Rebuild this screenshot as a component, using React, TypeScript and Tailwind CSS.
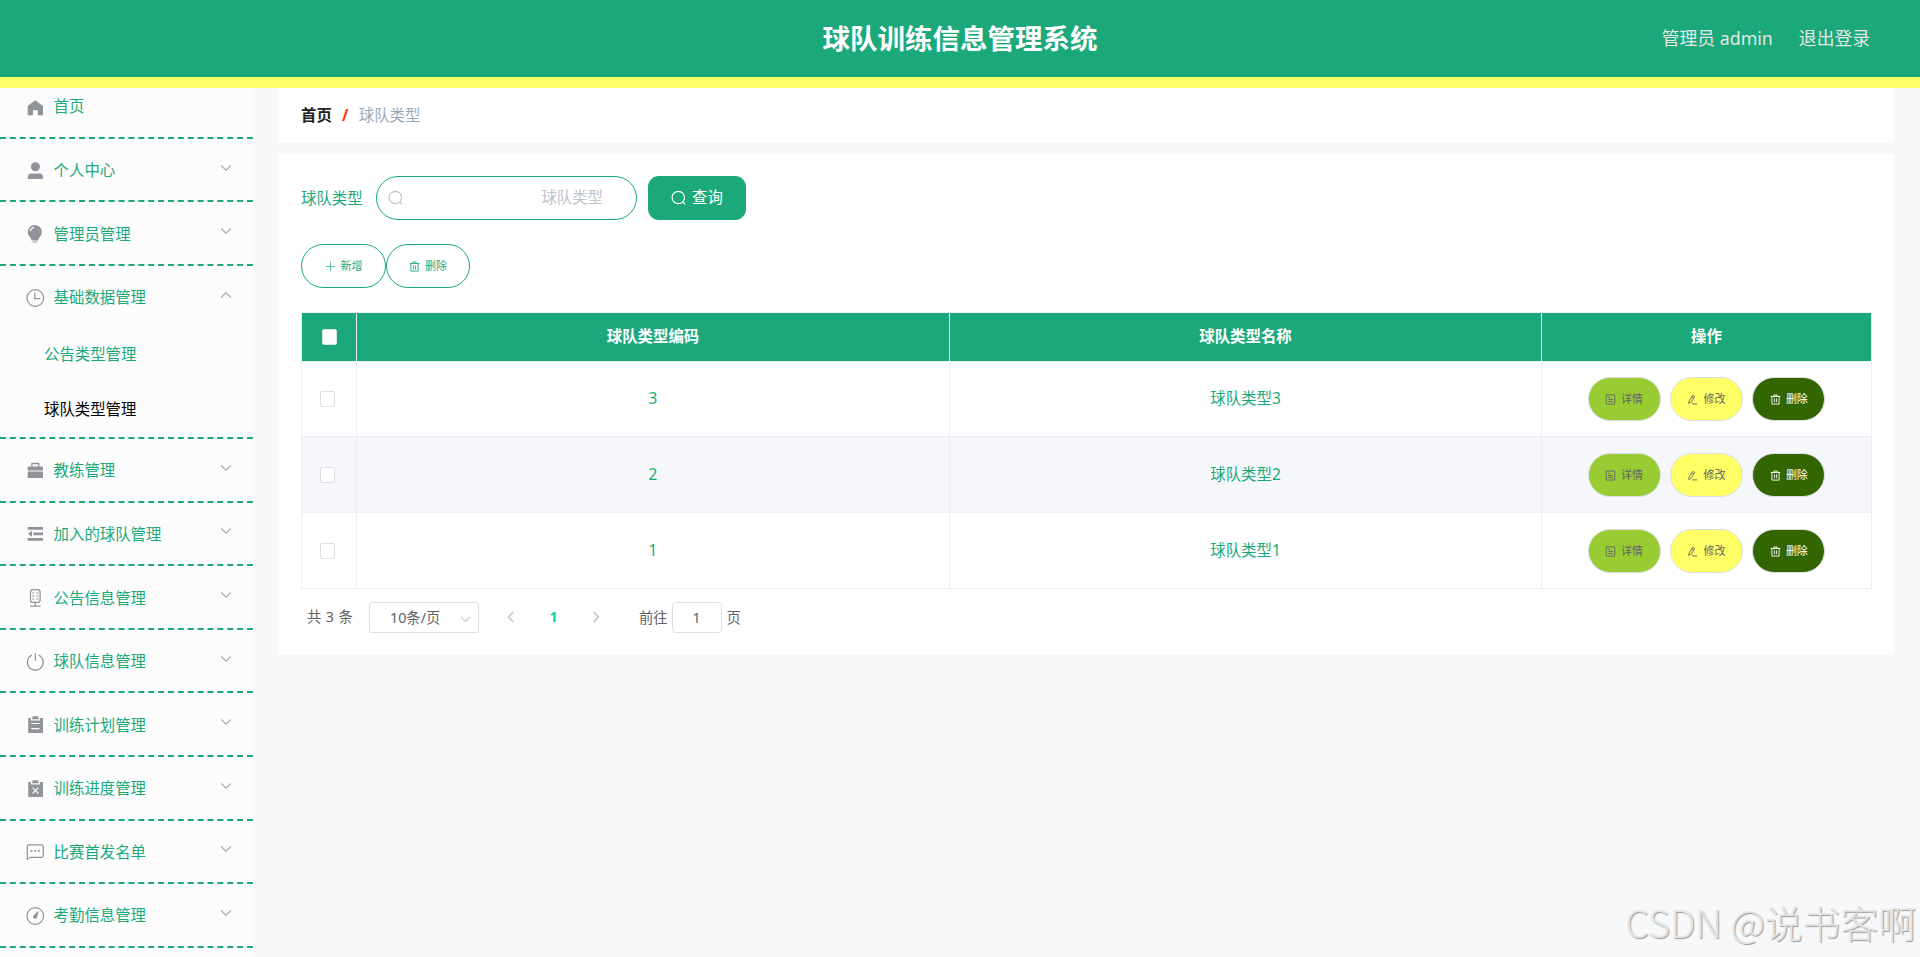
import React from "react";

type IconProps = { className?: string };

const stroke = {
  fill: "none",
  stroke: "currentColor",
  strokeWidth: 1.2,
  strokeLinecap: "round" as const,
  strokeLinejoin: "round" as const,
};

const icons: Record<string, React.ReactNode> = {
  home: <path fill="currentColor" d="M10.3 2.2 18 8v9.2h-5.2v-5H8v5H2.7V8z" />,
  user: (
    <g fill="currentColor">
      <circle cx="10.4" cy="5.8" r="4.5" />
      <path d="M2.8 18v-2.2c0-1.8 1.3-3.2 3.2-3.2h8.8c1.9 0 3.2 1.4 3.2 3.2V18z" />
    </g>
  ),
  bulb: (
    <g>
      <path
        fill="currentColor"
        d="M9.8.9a7.1 7.1 0 0 1 7.1 7.1c0 3-1.9 4.4-2.9 6-.5.9-.7 1.6-.9 2.600H6.500c-.2-1-.4-1.700-.9-2.600-1-1.600-2.900-3-2.900-6A7.100 7.100 0 0 1 9.800.9z"
      />
      <path d="M5.3 7.2A4.700 4.700 0 0 1 9 3.400" fill="none" stroke="#fcfcfc" strokeWidth="1.200" />
      <path d="M7.600 18h4.600" stroke="currentColor" strokeWidth="1" />
    </g>
  ),
  clock: (
    <g {...stroke}>
      <circle cx="10.3" cy="10" r="8.300" />
      <path d="M9.800 5.200v5.500h5" />
    </g>
  ),
  briefcase: (
    <g>
      <path d="M6.900 6V2.500h6.800V6" fill="none" stroke="currentColor" strokeWidth="1.300" />
      <path fill="currentColor" d="M2.700 6.400a1 1 0 0 1 1-1H17a1 1 0 0 1 1 1v3H2.700zM2.700 10.400H18V17H2.700z" />
    </g>
  ),
  fold: (
    <path
      fill="currentColor"
      d="M2.700 3H18v2.700H2.700zM8.300 8.500H18v2.700H8.300zM2.700 14H18v2.700H2.700zM7 6.800v6L3 9.800z"
    />
  ),
  mic: (
    <g {...stroke}>
      <rect x="5.500" y="1.700" width="9.600" height="12.600" rx="2.400" />
      <path d="M10.300 14.500v3.500M5.500 18.200h9.600M7.600 5h1.200M7.600 8h1.200M7.600 11h1.200M11.900 5h1.200M11.900 8h1.200M11.900 11h1.200" />
    </g>
  ),
  power: (
    <g {...stroke}>
      <path d="M6.600 3.300a7.900 7.900 0 1 0 7.400 0M10.300 1.500v6.800" />
    </g>
  ),
  order: (
    <g>
      <path fill="currentColor" d="M3.200 2.900H18V18H3.200zM7.500 1.300h5.800v3H7.500z" />
      <path d="M6.500 2.700v2.200h7.900V2.700M6.300 8.500h8.200M6.300 13.600h8.200" fill="none" stroke="#fcfcfc" strokeWidth="1.100" />
    </g>
  ),
  release: (
    <g>
      <path fill="currentColor" d="M3.200 2.900H18V18H3.200zM7.500 1.300h5.800v3H7.500z" />
      <path
        d="M6.500 2.700v2.200h7.900V2.700M7.600 8.700l5.800 5.800M13.400 8.700l-5.800 5.800"
        fill="none"
        stroke="#fcfcfc"
        strokeWidth="1.200"
      />
    </g>
  ),
  chat: (
    <g {...stroke}>
      <path d="M2.300 17.600V4.600a1.800 1.800 0 0 1 1.800-1.800h12.400a1.800 1.800 0 0 1 1.800 1.800v9a1.800 1.800 0 0 1-1.800 1.800H5z" />
      <path d="M6.300 8.800h.6M10 8.800h.6M13.700 8.800h.6" strokeWidth="1.800" />
    </g>
  ),
  compass: (
    <g>
      <circle cx="10.300" cy="10" r="8.300" {...stroke} />
      <path fill="currentColor" d="M13.800 4.600l-1.700 6.600a2 2 0 1 1-3.300-1.900z" />
    </g>
  ),
};

function MenuIcon({ name }: { name: string }) {
  return (
    <svg viewBox="0 0 20 20" className="size-5 shrink-0 text-[#909399]">
      {icons[name]}
    </svg>
  );
}

function Chevron({ className }: IconProps) {
  return (
    <svg viewBox="0 0 12 12" className={className} fill="none" stroke="currentColor" strokeWidth="1.1">
      <path d="M1.200 3.500 6 8.200l4.800-4.700" />
    </svg>
  );
}

function Search({ className }: IconProps) {
  return (
    <svg viewBox="0 0 16 16" className={className} fill="none" stroke="currentColor" strokeWidth="1.2">
      <circle cx="7.300" cy="7.500" r="6.200" />
      <path d="m11.800 12 2.500 2.400" />
    </svg>
  );
}

function Plus() {
  return (
    <svg viewBox="0 0 11 11" className="size-[11px]" fill="none" stroke="currentColor" strokeWidth="0.7">
      <path d="M5.500 1v9M1 5.500h9" />
    </svg>
  );
}

function Trash() {
  return (
    <svg viewBox="0 0 11 11" className="size-[11px]" fill="none" stroke="currentColor" strokeWidth="0.9">
      <path d="M.7 2.500h9.600M3.800 2.300V1h3.400v1.300M1.900 2.500v7.600h7.200V2.500M4.400 4.300v4M6.600 4.300v4" />
    </svg>
  );
}

function Doc() {
  return (
    <svg viewBox="0 0 11 11" className="size-[11px]" fill="none" stroke="currentColor" strokeWidth="0.9">
      <path d="M1.200 1h8.500v9H1.200zM3.300 3.500h1.800M3.300 5.500h4.400M3.300 7.500h4.400" />
    </svg>
  );
}

function Edit() {
  return (
    <svg viewBox="0 0 11 11" className="size-[11px]" fill="none" stroke="currentColor" strokeWidth="0.9">
      <path d="M5.700 1.400 7.600 2.500 4.100 8.300 1.700 9.500 2 7.200zM4.900 2.900l1.800 1.100M5 9.900h5" />
    </svg>
  );
}

type Item = { label: string; icon: string; children?: string[] };

const menu: Item[] = [
  { label: "个人中心", icon: "user" },
  { label: "管理员管理", icon: "bulb" },
  { label: "基础数据管理", icon: "clock", children: ["公告类型管理", "球队类型管理"] },
  { label: "教练管理", icon: "briefcase" },
  { label: "加入的球队管理", icon: "fold" },
  { label: "公告信息管理", icon: "mic" },
  { label: "球队信息管理", icon: "power" },
  { label: "训练计划管理", icon: "order" },
  { label: "训练进度管理", icon: "release" },
  { label: "比赛首发名单", icon: "chat" },
  { label: "考勤信息管理", icon: "compass" },
];

function Sidebar() {
  return (
    <nav className="w-[253px] shrink-0 overflow-hidden bg-[#fcfcfc] text-[15.4px] text-[#1ba97b]">
      <div className="-mt-[12.9px] border-b-2 border-dashed border-[#1ba97b]">
        <div className="flex h-[61.6px] items-center gap-[8.6px] pt-1 pl-[25px]">
          <MenuIcon name="home" />
          <span className="-mt-0.5">首页</span>
        </div>
      </div>
      {menu.map((item) => (
        <div key={item.label} className="border-b-2 border-dashed border-[#1ba97b]">
          <div className="flex h-[61.6px] items-center gap-[8.6px] pt-0.5 pr-[21px] pl-[25px]">
            <MenuIcon name={item.icon} />
            <span className="flex-1">{item.label}</span>
            <Chevron
              className={
                item.children
                  ? "mb-1.5 size-3 rotate-180 text-[#a8abb2]"
                  : "mb-1.5 size-3 text-[#a8abb2]"
              }
            />
          </div>
          {item.children?.map((child, i) => (
            <div
              key={child}
              className={
                i === 1
                  ? "flex h-[54.8px] items-center pl-11 text-black"
                  : "flex h-[54.8px] items-center pl-11"
              }
            >
              {child}
            </div>
          ))}
        </div>
      ))}
    </nav>
  );
}

const rows = [
  { code: "3", name: "球队类型3" },
  { code: "2", name: "球队类型2" },
  { code: "1", name: "球队类型1" },
];

const grid = "grid grid-cols-[55px_593px_592px_330px]";
const cell = "flex items-center justify-center border-r border-[#ebeef5]";
const pill =
  "flex h-11 w-[72.8px] items-center justify-center gap-[5px] rounded-[22px] border border-[#dcdfe6] pt-px text-[11px]";

function Table() {
  return (
    <div className="mt-6 w-[1571px] border-t border-l border-[#ebeef5] text-[15.4px] text-[#1ba97b]">
      <div className={grid + " h-[49px] border-b border-[#ebeef5] bg-[#1ba97b] font-bold text-white"}>
        <div className={cell}>
          <span className="ml-px h-4 w-[15px] rounded-xs border border-[#dcdfe6] bg-white" />
        </div>
        <div className={cell}>球队类型编码</div>
        <div className={cell}>球队类型名称</div>
        <div className={cell}>操作</div>
      </div>
      {rows.map((r, i) => (
        <div
          key={r.code}
          className={
            grid +
            " border-b border-[#ebeef5] " +
            (i === 0 ? "h-[75px]" : "h-[76px]") +
            (i === 1 ? " bg-[#f5f7fa]" : " bg-white")
          }
        >
          <div className={cell}>
            <span className="mr-[3px] h-4 w-[15px] rounded-xs border border-[#dcdfe6] bg-white" />
          </div>
          <div className={cell}>{r.code}</div>
          <div className={cell}>{r.name}</div>
          <div className={cell + " gap-[9.6px]"}>
            <button className={pill + " bg-[#99cc33] text-[#606266]"}>
              <Doc />
              详情
            </button>
            <button className={pill + " bg-[#ffff66] text-[#606266]"}>
              <Edit />
              修改
            </button>
            <button className={pill + " bg-[#336600] text-white"}>
              <Trash />
              删除
            </button>
          </div>
        </div>
      ))}
    </div>
  );
}

function Pagination() {
  return (
    <div className="mt-[13px] flex h-[31px] items-center pl-[6px] text-[14.3px] text-[#606266]">
      <span className="w-[62px] pb-0.5 [word-spacing:0.8px]">共 3 条</span>
      <div className="flex h-[31px] w-[110px] items-center rounded-[3px] border border-[#dcdfe6] pr-[7px] pl-5">
        <span className="flex-1">10条/页</span>
        <Chevron className="mt-1 size-[11px] text-[#c0c4cc]" />
      </div>
      <svg viewBox="0 0 12 12" className="mb-0.5 ml-[26px] size-3 text-[#c0c4cc]" fill="none" stroke="currentColor" strokeWidth="1.6">
        <path d="M8.300 1 3.500 6l4.800 5" />
      </svg>
      <span className="w-[73px] pb-0.5 text-center font-bold text-[#13ce95]">1</span>
      <svg viewBox="0 0 12 12" className="mb-0.5 size-3 text-[#c0c4cc]" fill="none" stroke="currentColor" strokeWidth="1.6">
        <path d="m3.700 1 4.800 5-4.800 5" />
      </svg>
      <span className="ml-[37px]">前往</span>
      <span className="ml-1 flex h-[31px] w-[50px] items-center justify-center rounded-[4px] border border-[#dcdfe6]">1</span>
      <span className="ml-[5px]">页</span>
    </div>
  );
}

const outline =
  "flex h-11 items-center justify-center gap-[5px] rounded-[22px] border border-[#1ba97b] text-[11px] text-[#1ba97b]";

export default function App() {
  return (
    <div className="relative flex h-[957px] w-[1920px] flex-col overflow-hidden bg-[#f7f8fa] font-['Noto_Sans','Noto_Sans_CJK_SC',sans-serif]">
      <header className="grid h-[88px] shrink-0 grid-cols-3 items-center border-b-[11px] border-[#ffff66] bg-[#1ba97b]">
        <h1 className="col-start-2 pt-px text-center text-[27.5px] leading-none font-bold text-white">
          球队训练信息管理系统
        </h1>
        <div className="flex justify-end gap-[26px] pr-[50px] text-[17.8px] text-[#e6e6e6]">
          <span>管理员 admin</span>
          <span>退出登录</span>
        </div>
      </header>
      <div className="flex min-h-0 flex-1">
        <Sidebar />
        <main className="ml-[26px] w-[1615px]">
          <div className="flex h-[55px] items-center rounded-[4px] bg-white pl-[22px] text-[15.4px]">
            <span className="font-bold text-[#222]">首页</span>
            <span className="w-[27px] text-center font-bold text-[#ff3300]">/</span>
            <span className="text-[#97a8be]">球队类型</span>
          </div>
          <section className="mt-[11px] h-[501px] bg-white px-[22px] pt-[22px]">
            <div className="flex h-11 items-center text-[15.4px]">
              <span className="w-[75px] pt-px text-[#1ba97b]">球队类型</span>
              <div className="flex h-11 w-[261px] items-center justify-between rounded-[22px] border border-[#1ba97b] pr-[33px] pl-[11px] text-[#c0c4cc]">
                <Search className="size-4" />
                <span>球队类型</span>
              </div>
              <button className="ml-[11px] flex h-11 w-[98px] items-center justify-center gap-[5px] rounded-[11px] bg-[#1ba97b] text-white">
                <Search className="size-4" />
                查询
              </button>
            </div>
            <div className="mt-6 flex">
              <button className={outline + " w-[85px]"}>
                <Plus />
                新增
              </button>
              <button className={outline + " w-[84px]"}>
                <Trash />
                删除
              </button>
            </div>
            <Table />
            <Pagination />
          </section>
        </main>
      </div>
      <div className="absolute right-[4px] bottom-[6px] font-['Noto_Sans_CJK_SC',sans-serif] text-[37.8px] font-light whitespace-nowrap text-[#e4e5e5] [text-shadow:1px_1px_1px_#999]">
        CSDN @说书客啊
      </div>
    </div>
  );
}
